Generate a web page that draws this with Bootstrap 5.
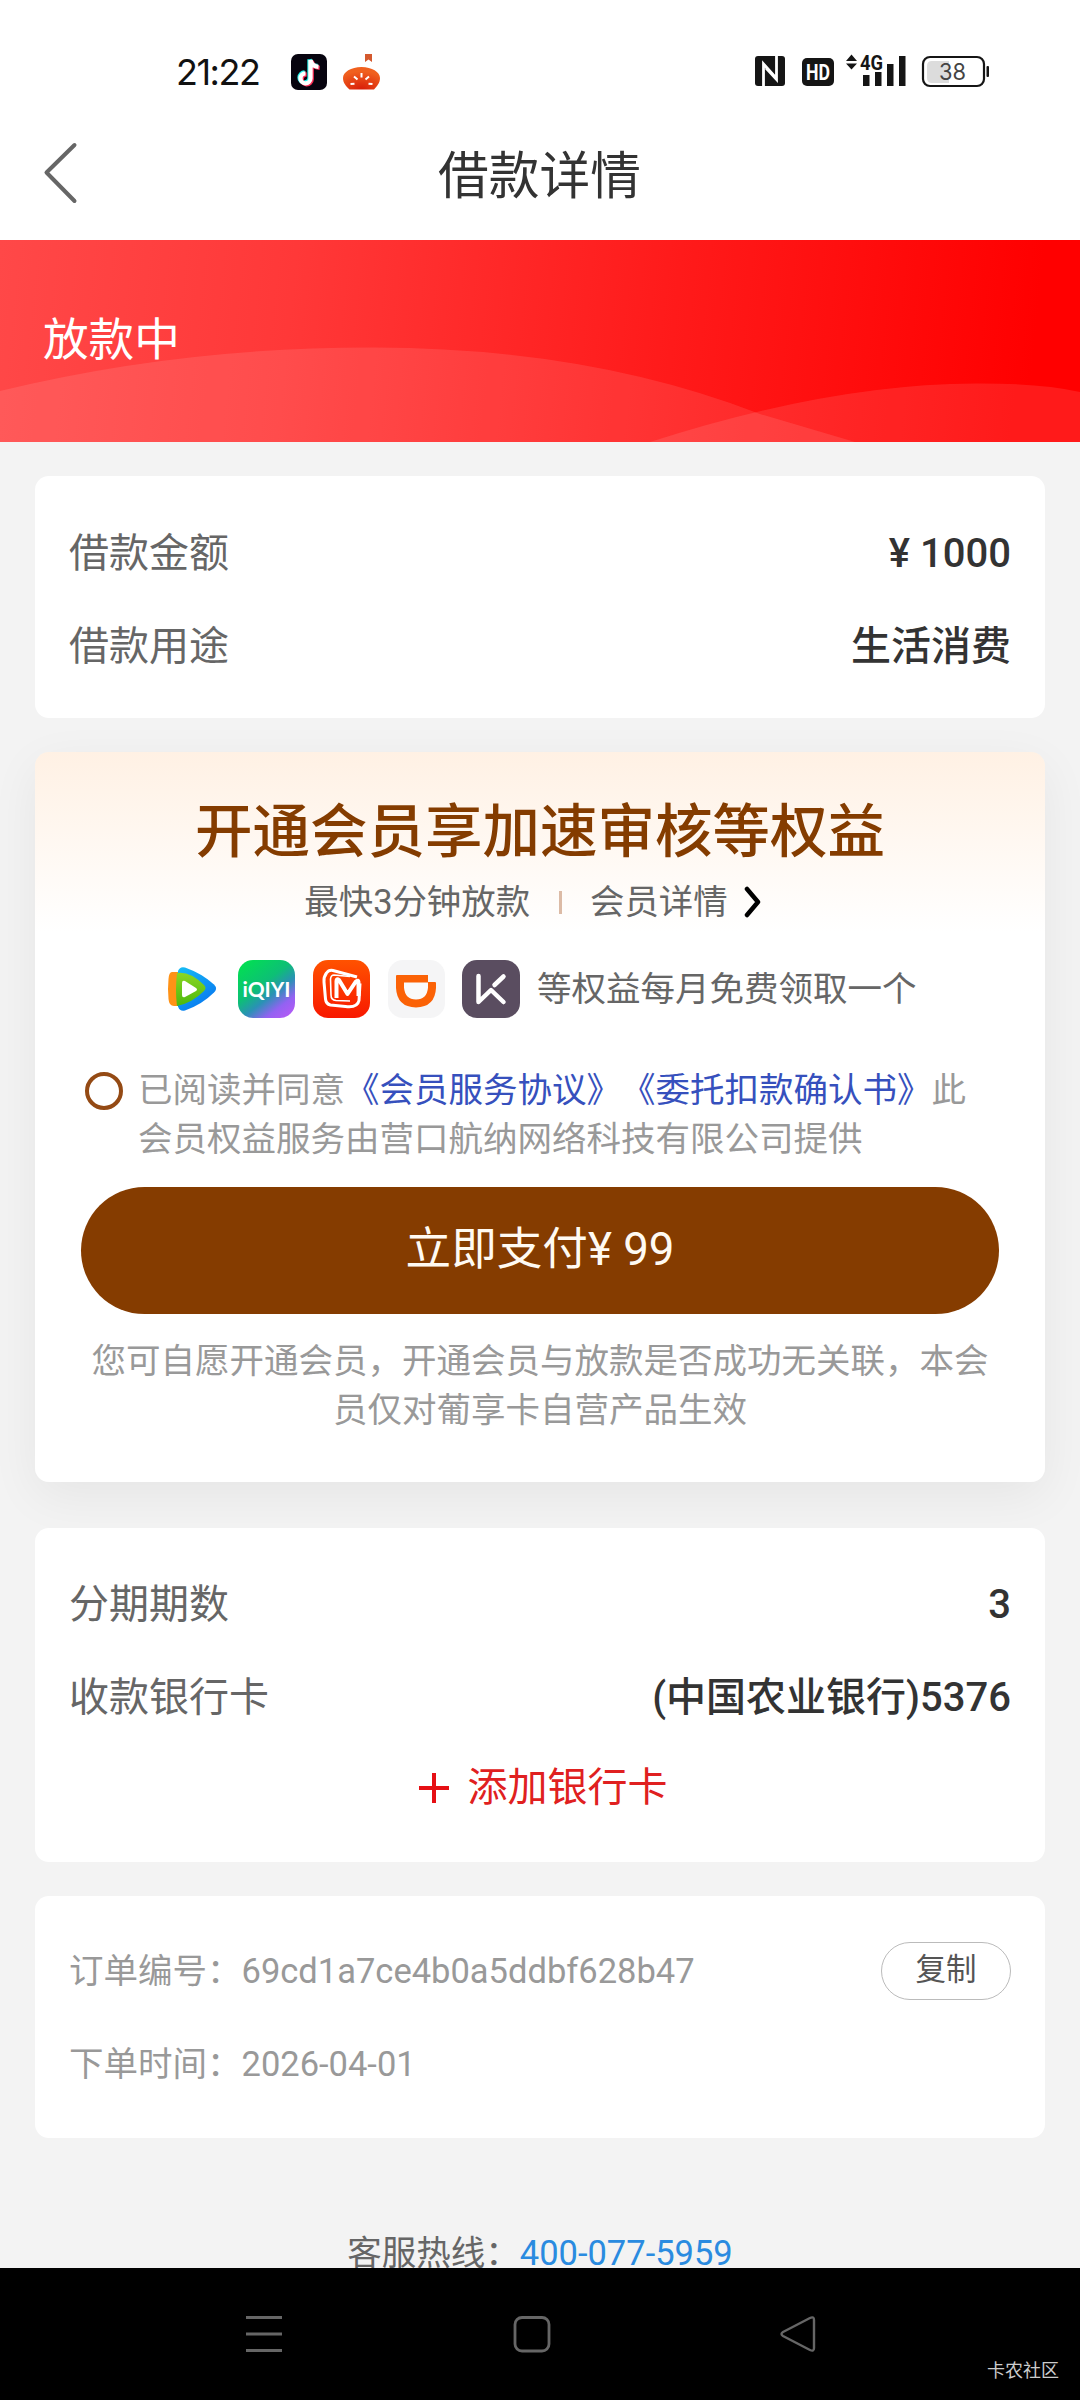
<!DOCTYPE html>
<html lang="zh-CN">
<head>
<meta charset="utf-8">
<meta name="viewport" content="width=device-width, initial-scale=1">
<title>借款详情</title>
<link href="https://cdn.jsdelivr.net/npm/bootstrap@5.3.0/dist/css/bootstrap.min.css" rel="stylesheet">
<style>
body{width:1080px;height:2400px;overflow:hidden;background:#f3f3f3;color:#333;font-family:Roboto,"Noto Sans CJK SC",sans-serif;font-size:40px;line-height:1}
svg{display:block;flex:none}
.status-bar{height:111px;padding:54px 91px 0 176px}
.clock{font:400 36px/36px Inter,sans-serif;letter-spacing:-1.5px;width:115px;color:#111}
.title-bar{height:129px;padding-left:43px}
.title-bar h1{font-size:50.7px;line-height:60px;font-weight:400;margin:2px 0 0 -80px}
.page-body{height:2028px}
.banner{height:202px;padding-left:43px;background:linear-gradient(96deg,#ff4848 0%,#ff3838 27%,#ff1a1a 62%,#f00 95%)}
.banner-state{font-size:45.6px;padding-bottom:1px}
.panel{border:0;border-radius:14px;margin:0 35px;padding:0 34px}
.line{height:92.5px}
.lbl{color:#666}
.val{font-weight:500;color:#333}
.p1{margin-top:34px;height:242px;padding-top:32px}
.vip{margin-top:34px;height:730px;padding:0;background:linear-gradient(180deg,#fff1e4 0,#fff 180px);box-shadow:0 14px 50px rgba(0,0,0,.06)}
.vip h2{font-size:57.5px;line-height:64px;font-weight:500;color:#843c00;margin:49px 0 0;text-align:center}
.sub-line{height:50px;margin-top:12px;padding-right:14px;font-size:34.4px;color:#666}
.sub-line i{width:3px;height:23px;background:#dcbba6;margin:0 28px 0 29px}
.perks{margin-top:33px;height:58px;padding-left:131px;font-size:34.5px;color:#666}
.agree{margin-top:48px;padding-left:50px;font-size:34.5px;line-height:49px;color:#999;white-space:nowrap;text-spacing-trim:space-all;font-kerning:none;font-feature-settings:"chws" 0,"halt" 0}
.ring{width:38px;height:38px;border:4px solid #944a14;border-radius:50%;margin:6px 15px 0 0}
.agree a{display:inline-block;color:#3650bd;text-decoration:none}
.pay{width:918px;height:127px;border:0;border-radius:64px;background:#853c00;color:#fffaf2;font-size:45.6px;margin:23px auto 0}
.pay:hover{background:#853c00;color:#fffaf2}
.tip{margin:23px 0 0;font-size:34.5px;line-height:49px;color:#999;text-align:center;white-space:nowrap}
.p3{margin-top:46px;height:334px;padding-top:31px}
.add{color:#e02020;height:88px}
.p4{margin-top:34px;height:242px;padding-top:29px;font-size:34.5px;color:#999}
.copy{width:130px;height:58px;border:1.5px solid #bbb;border-radius:29px;font-size:30.5px;color:#555;padding:0 0 3px;line-height:1}
.hotline{margin-top:92px;height:46px;font-size:34.5px;color:#666}
.hotline a{color:#2a8be0;text-decoration:none}
.sys-nav{height:132px;background:#000}
.wm{left:987px;top:94px;font-size:18px;line-height:18px;color:#ccc;white-space:nowrap}
</style>
</head>
<body class="d-flex flex-column">
<header class="bg-white">
  <div class="status-bar d-flex align-items-start">
    <span class="clock">21:22</span>
    <svg width="36" height="36" viewBox="0 0 36 36"><rect width="36" height="36" rx="7" fill="#07040f"/><g fill="none" stroke-width="4.300"><path d="M19.500 6v18.500a5 5 0 1 1-5-5.200M19.500 6c1 4.500 4 6.500 8 6.800" stroke="#25f4ee" transform="translate(-1 -.8)"/><path d="M19.500 6v18.500a5 5 0 1 1-5-5.200M19.500 6c1 4.500 4 6.500 8 6.800" stroke="#fe2c55" transform="translate(1.200 1)"/><path d="M19.500 6v18.500a5 5 0 1 1-5-5.200M19.500 6c1 4.500 4 6.500 8 6.800" stroke="#fff"/></g></svg>
    <svg width="37" height="36" viewBox="0 0 37 36" style="margin-left:16px"><defs><radialGradient id="tom" cx=".5" cy="1" r=".8"><stop offset="0" stop-color="#d81c08"/><stop offset="1" stop-color="#f0601e"/></radialGradient></defs><path d="M22 0h7v8l-3.500-2.500L22 8z" fill="#d4592e"/><path d="M18.500 13C29 13 37 18 37 24c0 5-3 8-6 11.500H6.500C3 32 0 29 0 24c0-6 8-11 18.500-11z" fill="url(#tom)"/><path d="M18.500 19v4.500M11 22.500l3.500 3M26 22.500l-3.500 3M7.500 30l4-.3M29.500 30l-4-.3" stroke="#fff" stroke-width="2"/></svg>
    <svg class="ms-auto" width="237" height="36" viewBox="752 54 237 36">
      <rect x="755" y="56" width="30" height="30" rx="3" fill="#151515"/><path d="M763.500 86V64l13 14.500M776.500 56v23.500L766 68" stroke="#fff" stroke-width="2.800" fill="none"/>
      <rect x="802" y="58" width="32" height="28" rx="5" fill="#151515"/><text x="818" y="80" text-anchor="middle" font-family="Roboto" font-weight="700" font-size="22" textLength="24" lengthAdjust="spacingAndGlyphs" fill="#fff">HD</text>
      <path d="M846 61l5.500-6.500L857 61zM846 63.500h11l-5.500 6z" fill="#151515"/>
      <text x="860" y="70" font-family="Roboto" font-weight="700" font-size="20" textLength="23" lengthAdjust="spacingAndGlyphs" fill="#151515">4G</text>
      <path d="M863 75h6.500v11H863zM875 72h6.500v14H875zM887 64h6.500v22H887zM899 56h6.500v30H899z" fill="#151515"/>
      <rect x="923" y="57" width="61" height="29" rx="7" fill="#fff" stroke="#151515" stroke-width="2.200"/><path d="M932 61h17v22h-17q-5 0-5-5V66q0-5 5-5z" fill="#dcdcdc"/><rect x="986.500" y="66" width="2.500" height="11" rx="1" fill="#151515"/><text x="952.500" y="80" text-anchor="middle" font-family="Inter" font-size="23" textLength="27" lengthAdjust="spacingAndGlyphs" fill="#444">38</text>
    </svg>
  </div>
  <div class="title-bar d-flex align-items-center">
    <svg width="36" height="64" viewBox="0 0 36 64" style="margin-top:-6px"><path d="M31.500 4L3.500 31.500l28 28.500" fill="none" stroke="#666" stroke-width="4" stroke-linecap="round" stroke-linejoin="round"/></svg>
    <h1 class="flex-grow-1 text-center">借款详情</h1>
  </div>
</header>
<main class="page-body overflow-hidden">
  <section class="banner position-relative d-flex align-items-center text-white">
    <svg class="position-absolute top-0 start-0" width="1080" height="202" viewBox="0 0 1080 202"><path d="M0 151Q180 107 375 107.500Q590 108 760 174L855 202H0z" fill="#fff" opacity=".1"/><path d="M650 202Q830 144 975 143.500Q1040 143 1080 152V202z" fill="#fff" opacity=".1"/></svg>
    <div class="banner-state position-relative">放款中</div>
  </section>
  <section class="card panel p1">
    <div class="line d-flex align-items-center justify-content-between"><span class="lbl">借款金额</span><span class="val">¥ 1000</span></div>
    <div class="line d-flex align-items-center justify-content-between"><span class="lbl">借款用途</span><span class="val">生活消费</span></div>
  </section>
  <section class="card panel vip">
    <h2>开通会员享加速审核等权益</h2>
    <div class="sub-line d-flex align-items-center justify-content-center"><span>最快3分钟放款</span><i></i><span>会员详情</span><svg width="18" height="32" viewBox="0 0 18 32" style="margin-left:16px"><path d="M3 3l11 13L3 29" fill="none" stroke="#000" stroke-width="4.500" stroke-linecap="round" stroke-linejoin="round"/></svg></div>
    <div class="perks d-flex align-items-center">
      <svg width="354" height="58" viewBox="166 960 354 58">
        <defs>
          <linearGradient id="q1" x1="0" y1="0" x2=".6" y2="1"><stop offset="0" stop-color="#16bdf5"/><stop offset="1" stop-color="#0878f0"/></linearGradient>
          <linearGradient id="q2" x1="0" y1="0" x2="0" y2="1"><stop offset="0" stop-color="#8bd622"/><stop offset="1" stop-color="#4cb80e"/></linearGradient>
          <linearGradient id="iq" x1=".15" y1="0" x2=".9" y2="1"><stop offset="0" stop-color="#02df52"/><stop offset=".4" stop-color="#0dbf76"/><stop offset=".6" stop-color="#2a91b5"/><stop offset=".8" stop-color="#9362f2"/><stop offset="1" stop-color="#b65af6"/></linearGradient>
          <linearGradient id="mg" x1="0" y1="0" x2="0" y2="1"><stop offset="0" stop-color="#ff5200"/><stop offset="1" stop-color="#f81800"/></linearGradient>
        </defs>
        <path d="M172 972h8v34h-6q-5 0-5.500-7-1-10 0-20 .5-7 3.500-7z" fill="#ff9216"/>
        <path d="M178 971q2-5 7-3.500 17 6 29 17 4 4 0 8-12 12-29 18-5 1.500-7-4z" fill="url(#q1)"/>
        <path d="M177 973q13-2 27 12 3 3 0 6-12 12-27 15-2-16 0-33z" fill="url(#q2)"/>
        <path d="M182 983q0-3 3-2l11 7q2 1.500 0 3l-11 6q-3 1-3-2z" fill="#fff"/>
        <rect x="238" y="960" width="57" height="58" rx="15" fill="url(#iq)"/>
        <text x="242.500" y="996.500" font-family="Lato" font-weight="700" font-size="21" textLength="48" lengthAdjust="spacingAndGlyphs" fill="#fff">iQIYI</text>
        <rect x="313" y="960" width="57" height="58" rx="15" fill="url(#mg)"/>
        <path d="M357 977l-24-6.500q-4-1-6.500 2.500-3 4-2.500 9l1.500 17q.5 5 5 6l15 1.500q12 1.500 13.500-6l1-17" fill="none" stroke="#fff" stroke-width="3" stroke-linejoin="round"/>
        <path d="M350 976.500l-16-1.500q-3 0-3.500 4l.5 16q0 5 5 5.500l14 .5" fill="none" stroke="#fff" stroke-width="1.600"/>
        <path d="M336.500 998v-17q0-3 2.500-1l8.500 14 8-12q3-3 3 1v13" fill="none" stroke="#fff" stroke-width="4" stroke-linejoin="round"/>
        <rect x="388" y="960" width="57" height="58" rx="15" fill="#f5f5f6"/>
        <path d="M396 976q0-1 1-1h31v7h7q1 0 1 1v5q-1 19-20 19.500-19-.5-20-19.500z" fill="#fb6206"/><path d="M404 982.500h24v5q-1 12-12 12-11 0-12-12z" fill="#fafafa"/>
        <rect x="462" y="960" width="58" height="58" rx="15" fill="#5a4d60"/>
        <path d="M478.500 976v26L491 990l12.500 12M494.500 985l9-8.500" fill="none" stroke="#fff" stroke-width="4.500" stroke-linecap="round" stroke-linejoin="round"/>
      </svg>
      <span style="margin-left:17px">等权益每月免费领取一个</span>
    </div>
    <div class="agree d-flex align-items-start"><span class="ring flex-shrink-0"></span><div>已阅读并同意<a href="#">《会员服务协议》</a><a href="#">《委托扣款确认书》</a>此<br>会员权益服务由营口航纳网络科技有限公司提供</div></div>
    <button type="button" class="btn pay">立即支付¥ 99</button>
    <p class="tip">您可自愿开通会员，开通会员与放款是否成功无关联，本会<br>员仅对葡享卡自营产品生效</p>
  </section>
  <section class="card panel p3">
    <div class="line d-flex align-items-center justify-content-between"><span class="lbl">分期期数</span><span class="val">3</span></div>
    <div class="line d-flex align-items-center justify-content-between"><span class="lbl">收款银行卡</span><span class="val">(中国农业银行)5376</span></div>
    <div class="add d-flex align-items-center justify-content-center"><svg width="32" height="32" viewBox="0 0 32 32" style="margin:0 18px 0 5px"><path d="M1 16h30M16 1v30" stroke="#e60f14" stroke-width="4"/></svg>添加银行卡</div>
  </section>
  <section class="card panel p4">
    <div class="line d-flex align-items-center justify-content-between"><span>订单编号：69cd1a7ce4b0a5ddbf628b47</span><button type="button" class="btn copy">复制</button></div>
    <div class="line d-flex align-items-center">下单时间：2026-04-01</div>
  </section>
  <div class="hotline d-flex align-items-center justify-content-center">客服热线：<a href="#">400-077-5959</a></div>
</main>
<footer class="sys-nav position-relative">
  <svg width="1080" height="132" viewBox="0 2268 1080 132" fill="none" stroke="#666"><path d="M246 2317.500h36M246 2334h36M246 2350.500h36" stroke-width="3"/><rect x="515" y="2317.500" width="34" height="33.500" rx="7" stroke-width="2.800"/><path d="M783 2332l27-14q4-2 4 2v28q0 4-4 2l-27-14q-3-2 0-4z" stroke-width="2.400"/></svg>
  <span class="wm position-absolute">卡农社区</span>
</footer>
<script src="https://cdn.jsdelivr.net/npm/bootstrap@5.3.0/dist/js/bootstrap.bundle.min.js"></script>
</body>
</html>
